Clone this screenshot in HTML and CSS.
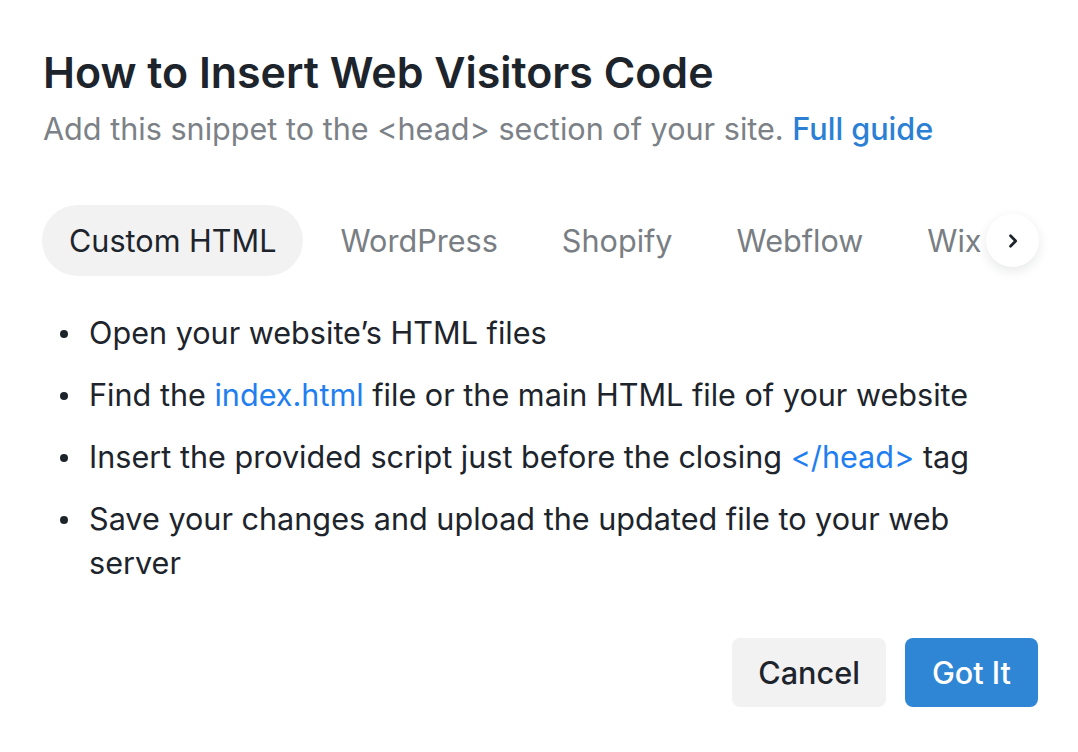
FILE: index.html
```html
<!DOCTYPE html>
<html lang="en">
<head>
<meta charset="utf-8">
<title>How to Insert Web Visitors Code</title>
<link rel="stylesheet" href="styles.css">
</head>
<body>
<div class="modal">
  <h1 class="title">How to Insert Web Visitors Code</h1>
  <p class="subtitle">Add this snippet to the &lt;head&gt; section of your site. <a class="guide" href="#">Full guide</a></p>

  <div class="tabs-wrap">
    <div class="tabs">
      <button class="tab active">Custom HTML</button>
      <button class="tab">WordPress</button>
      <button class="tab">Shopify</button>
      <button class="tab">Webflow</button>
      <button class="tab">Wix</button>
    </div>
    <button class="next" aria-label="Next">
      <svg width="20" height="20" viewBox="0 0 20 20"><path d="M7.5 4.8 L12.7 10 L7.5 15.2" fill="none" stroke="#1d242c" stroke-width="2.8" stroke-linecap="round" stroke-linejoin="round"/></svg>
    </button>
  </div>

  <ul class="steps">
    <li>Open your website’s HTML files</li>
    <li>Find the <span class="code">index.html</span> file or the main HTML file of your website</li>
    <li>Insert the provided script just before the closing <span class="code">&lt;/head&gt;</span> tag</li>
    <li>Save your changes and upload the updated file to your web server</li>
  </ul>

  <div class="actions">
    <button class="btn btn-cancel">Cancel</button>
    <button class="btn btn-primary">Got It</button>
  </div>
</div>
</body>
</html>
```
FILE: styles.css
```css
* { box-sizing: border-box; }
html, body {
  margin: 0;
  padding: 0;
  background: #ffffff;
}
body {
  font-family: Inter, "Noto Sans", sans-serif;
  color: #1d242c;
}
.modal {
  width: 1078px;
  height: 752px;
  padding: 46px 40px 0 43px;
}
.title {
  margin: 0;
  font-size: 42.9px;
  line-height: 52px;
  font-weight: 600;
  color: #1d242c;
}
.subtitle {
  margin: 9px 0 0;
  font-size: 30.6px;
  line-height: 44px;
  color: #7b8186;
}
.guide {
  color: #2b80d3;
  text-decoration: none;
  font-weight: 500;
}
.tabs-wrap {
  position: relative;
  margin-top: 54px;
  margin-left: -1px;
}
.tabs {
  display: flex;
  gap: 10px;
  overflow: hidden;
}
.tab {
  flex: none;
  height: 71px;
  padding: 0 27px;
  border: 0;
  border-radius: 36px;
  background: transparent;
  font-family: inherit;
  font-size: 30.6px;
  color: #787e83;
  white-space: nowrap;
}
.tab.active {
  background: #f2f2f2;
  color: #1d242c;
}
.next {
  position: absolute;
  right: -1px;
  top: 9px;
  width: 53px;
  height: 53px;
  border-radius: 50%;
  border: 0;
  background: #ffffff;
  box-shadow: 0 4px 12px rgba(20, 30, 40, 0.10);
  display: flex;
  align-items: center;
  justify-content: center;
  padding: 0;
}
.steps {
  margin: 35px 0 0;
  padding: 0;
  list-style: none;
  font-size: 30.6px;
  line-height: 44px;
  color: #1d242c;
}
.steps li {
  margin-bottom: 18px;
  padding-left: 46px;
}
.steps li:last-child {
  margin-bottom: 0;
}
.steps li::before {
  content: "";
  display: inline-block;
  width: 8px;
  height: 8px;
  border-radius: 50%;
  background: #1d242c;
  margin-left: -29px;
  margin-right: 21px;
  vertical-align: 6px;
}
.code {
  color: #1f7ef0;
}
.actions {
  display: flex;
  justify-content: flex-end;
  gap: 19px;
  margin-top: 53px;
}
.btn {
  height: 69px;
  padding: 0 27px;
  border: 0;
  border-radius: 8px;
  font-family: inherit;
  font-size: 30.6px;
  font-weight: 500;
}
.btn-cancel {
  padding: 0 26px;
  background: #f2f2f2;
  color: #1d242c;
}
.btn-primary {
  background: #2f86d4;
  color: #ffffff;
}
```
